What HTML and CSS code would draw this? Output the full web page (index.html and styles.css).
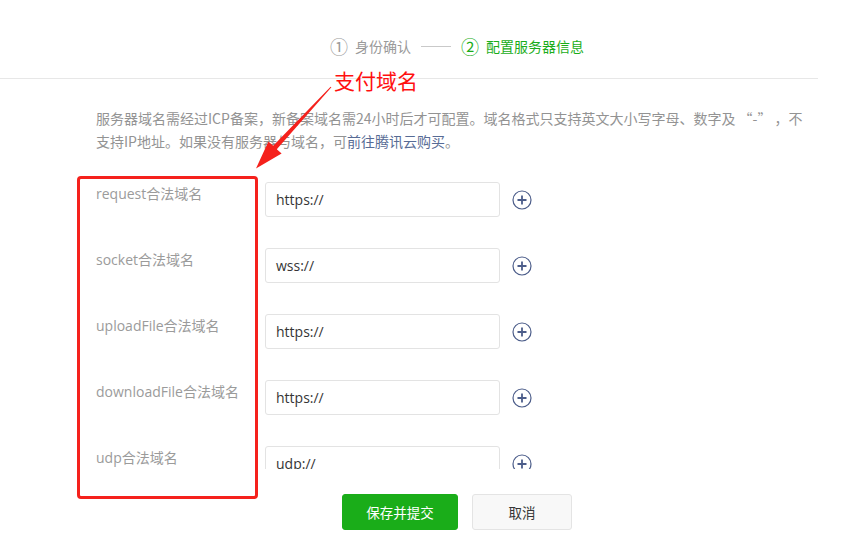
FILE: index.html
```html
<!DOCTYPE html>
<html lang="zh-CN">
<head>
<meta charset="utf-8">
<link rel="stylesheet" href="styles.css">
</head>
<body>
<div class="page">
  <div class="steps">
    <div class="step"><span class="num">①</span><span class="txt">身份确认</span></div>
    <div class="step-line"></div>
    <div class="step active"><span class="num">②</span><span class="txt">配置服务器信息</span></div>
  </div>
  <div class="main">
    <p class="desc">服务器域名需经过ICP备案，新备案域名需24小时后才可配置。域名格式只支持英文大小写字母、数字及 “-” ，不<br>支持IP地址。如果没有服务器与域名，可<a class="link">前往腾讯云购买</a>。</p>
    <div class="scroll">
      <div class="row">
        <div class="label">request合法域名</div>
        <div class="input">https://</div>
        <svg class="plus" viewBox="0 0 20 20" width="20" height="20"><circle cx="10" cy="10" r="9" fill="none" stroke="#4c5d8a" stroke-width="1.2"/><path d="M5.5 10h9M10 5.5v9" stroke="#4c5d8a" stroke-width="1.8"/></svg>
      </div>
      <div class="row">
        <div class="label">socket合法域名</div>
        <div class="input">wss://</div>
        <svg class="plus" viewBox="0 0 20 20" width="20" height="20"><circle cx="10" cy="10" r="9" fill="none" stroke="#4c5d8a" stroke-width="1.2"/><path d="M5.5 10h9M10 5.5v9" stroke="#4c5d8a" stroke-width="1.8"/></svg>
      </div>
      <div class="row">
        <div class="label">uploadFile合法域名</div>
        <div class="input">https://</div>
        <svg class="plus" viewBox="0 0 20 20" width="20" height="20"><circle cx="10" cy="10" r="9" fill="none" stroke="#4c5d8a" stroke-width="1.2"/><path d="M5.5 10h9M10 5.5v9" stroke="#4c5d8a" stroke-width="1.8"/></svg>
      </div>
      <div class="row">
        <div class="label">downloadFile合法域名</div>
        <div class="input">https://</div>
        <svg class="plus" viewBox="0 0 20 20" width="20" height="20"><circle cx="10" cy="10" r="9" fill="none" stroke="#4c5d8a" stroke-width="1.2"/><path d="M5.5 10h9M10 5.5v9" stroke="#4c5d8a" stroke-width="1.8"/></svg>
      </div>
      <div class="row">
        <div class="label">udp合法域名</div>
        <div class="input">udp://</div>
        <svg class="plus" viewBox="0 0 20 20" width="20" height="20"><circle cx="10" cy="10" r="9" fill="none" stroke="#4c5d8a" stroke-width="1.2"/><path d="M5.5 10h9M10 5.5v9" stroke="#4c5d8a" stroke-width="1.8"/></svg>
      </div>
    </div>
    <div class="actions">
      <button class="btn primary">保存并提交</button>
      <button class="btn default">取消</button>
    </div>
  </div>
  <div class="mark-box"></div>
  <div class="mark-text">支付域名</div>
  <svg class="mark-arrow" width="853" height="555" viewBox="0 0 853 555">
    <polygon fill="#f5211c" points="331.4,87.3 276.8,149.2 281.6,153.6 256,168.5 268.4,141.4 273.2,145.8 330.6,86.7"/>
  </svg>
</div>
</body>
</html>
```
FILE: styles.css
```css
* { box-sizing: border-box; }
html, body { margin: 0; padding: 0; background: #fff; }
body {
  font-family: "Open Sans", "Noto Sans CJK SC", sans-serif;
  color: #353535;
}
.page { position: relative; width: 853px; height: 555px; overflow: hidden; }
.steps {
  width: 818px;
  height: 79px;
  border-bottom: 1px solid #e7e7e7;
  display: flex;
  align-items: center;
  justify-content: center;
  padding: 14px 0 0 96px;
  font-family: "Noto Sans CJK SC", sans-serif;
  font-size: 14px;
  color: #9a9a9a;
}
.step { display: flex; align-items: center; }
.step .num { font-size: 18px; margin-right: 7px; line-height: 1; }
.step.active { color: #1aad19; }
.step-line { width: 30px; height: 1px; background: #c9c9c9; margin: 0 10px; }
.main { width: 818px; padding-left: 96px; }
.desc {
  margin: 28px 0 0 0;
  font-family: "Noto Sans CJK SC", sans-serif;
  font-size: 14px;
  line-height: 23px;
  color: #939393;
  white-space: nowrap;
}
.link { color: #576b95; }
.scroll {
  margin-top: 29px;
  height: 287px;
  overflow: hidden;
  display: flex;
  flex-direction: column;
  gap: 31px;
}
.row { display: flex; align-items: center; flex: none; }
.label {
  width: 169px;
  align-self: flex-start;
  padding-top: 2px;
  font-size: 14px;
  line-height: 20px;
  color: #9b9b9b;
}
.input {
  width: 235px;
  height: 35px;
  border: 1px solid #e3e3e3;
  border-radius: 3px;
  padding-left: 10px;
  font-size: 14px;
  line-height: 33px;
  color: #353535;
}
.plus { margin-left: 12px; }
.actions {
  display: flex;
  justify-content: center;
  gap: 14px;
  margin-top: 25px;
}
.btn {
  height: 36px;
  border-radius: 3px;
  font-family: "Noto Sans CJK SC", sans-serif;
  font-size: 13.5px;
  padding: 0;
}
.primary { width: 116px; background: #1aad19; border: 1px solid #1aad19; color: #fff; }
.default { width: 100px; background: #f8f8f8; border: 1px solid #e4e4e4; color: #353535; }
.mark-box {
  position: absolute;
  left: 77px; top: 176px;
  width: 181px; height: 323px;
  border: 3px solid #f5211c;
  border-radius: 4px;
}
.mark-text {
  position: absolute;
  left: 334px; top: 68px;
  font-family: "Noto Sans CJK SC", sans-serif;
  font-size: 21px;
  line-height: 24px;
  color: #ff1010;
}
.mark-arrow { position: absolute; left: 0; top: 0; pointer-events: none; }
```
